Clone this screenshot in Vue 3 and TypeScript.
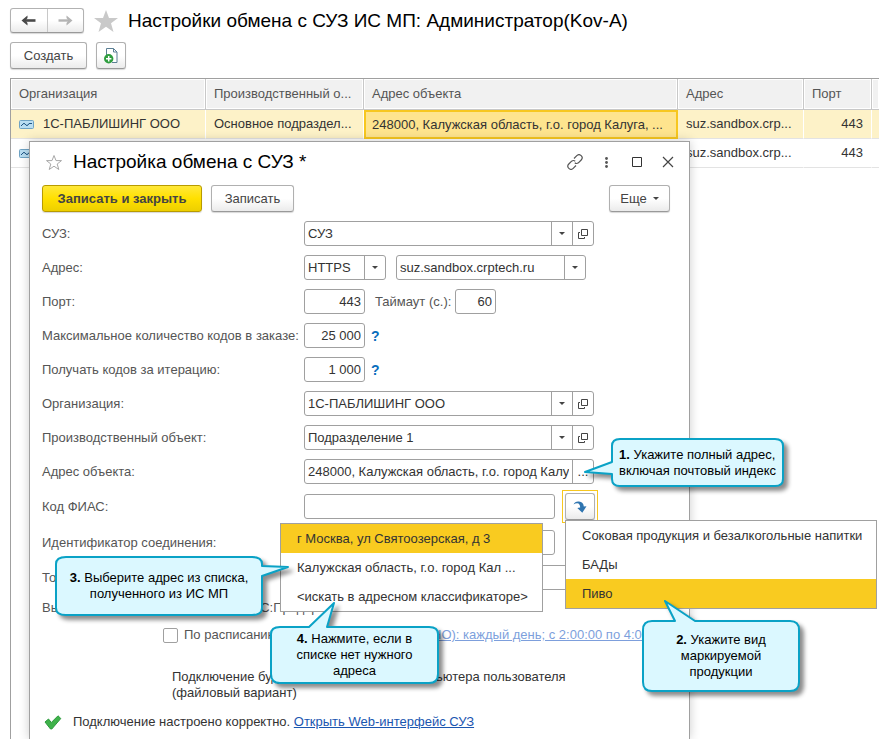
<script setup lang="ts">
import { ref } from 'vue'

interface ExchangeRow {
  org: string
  unit: string
  address: string
  host: string
  port: number
}

interface Callout {
  id: number
  lines: string[]
  shape: string
}

const columns = ['Организация', 'Производственный о...', 'Адрес объекта', 'Адрес', 'Порт', '']

const rows: ExchangeRow[] = [
  {
    org: '1С-ПАБЛИШИНГ ООО',
    unit: 'Основное подраздел...',
    address: '248000, Калужская область, г.о. город Калуга, ...',
    host: 'suz.sandbox.crp...',
    port: 443,
  },
  { org: '', unit: '', address: '', host: 'suz.sandbox.crp...', port: 443 },
]

const addressOptions = [
  'г Москва, ул Святоозерская, д 3',
  'Калужская область, г.о. город Кал ...',
  '<искать в адресном классификаторе>',
]
const productOptions = ['Соковая продукция и безалкогольные напитки', 'БАДы', 'Пиво']

const callouts: Callout[] = [
  {
    id: 1,
    lines: ['Укажите полный адрес,', 'включая почтовый индекс'],
    shape: 'M9 1H164Q172 1 172 8V41Q172 48 164 48H9Q1 48 1 41V36L-26 34L1 24V8Q1 1 9 1Z',
  },
  {
    id: 2,
    lines: ['Укажите вид', 'маркируемой', 'продукции'],
    shape: 'M10 1H33L23 -19L53 1H148Q157 1 157 10V62Q157 71 148 71H10Q1 71 1 62V10Q1 1 10 1Z',
  },
  {
    id: 3,
    lines: ['Выберите адрес из списка,', 'полученного из ИС МП'],
    shape: 'M11 1H197Q207 1 207 8V10L233 11L207 20V52Q207 59 197 59H11Q1 59 1 52V8Q1 1 11 1Z',
  },
  {
    id: 4,
    lines: ['Нажмите, если в', 'списке нет нужного', 'адреса'],
    shape: 'M10 1H39L64 -23L57 1H159Q168 1 168 8V48Q168 57 159 57H10Q1 57 1 48V8Q1 1 10 1Z',
  },
]

const host = ref('suz.sandbox.crptech.ru')
const port = ref('443')
const timeout = ref('60')
const maxCodes = ref('25 000')
const perIteration = ref('1 000')
const address = ref('248000, Калужская область, г.о. город Калуга')
const fias = ref('')
const connection = ref('')
const token = ref('')
const scheduled = ref(false)
</script>

<template>
  <main class="page">
    <header class="page-head">
      <div class="nav">
        <button type="button" aria-label="Назад">
          <svg width="15" height="11" viewBox="0 0 15 11"><path d="M2 5.500H14.500" stroke="#4a4a4a" stroke-width="2.600" /><path d="M0.500 5.500L6.500 0.500V3L4.500 5.500L6.500 8V10.500Z" fill="#4a4a4a" /></svg>
        </button>
        <button type="button" aria-label="Вперед">
          <svg width="15" height="11" viewBox="0 0 15 11"><path d="M0.500 5.500H13" stroke="#b4b4b4" stroke-width="2.400" /><path d="M14.500 5.500L8.500 0.500V3L10.500 5.500L8.500 8V10.500Z" fill="#b4b4b4" /></svg>
        </button>
      </div>
      <svg class="star" width="24" height="22" viewBox="0 0 24 22"><path d="M12 0L15 8H24L17 13.200L19.500 22L12 16.800L4.500 22L7 13.200L0 8H9Z" fill="#c9c9c9" /></svg>
      <h1>Настройки обмена с СУЗ ИС МП: Администратор(Kov-A)</h1>
    </header>

    <div class="toolbar">
      <button type="button" class="btn create">Создать</button>
      <button type="button" class="btn add" aria-label="Создать копированием">
        <svg width="14" height="16" viewBox="0 0 14 16">
          <path d="M2.500 7V0.500H9.500L13 4V14.500H8" fill="#fff" stroke="#5b7f94" />
          <path d="M9.500 0.500V4H13" fill="none" stroke="#5b7f94" />
          <circle cx="4.700" cy="10.700" r="4.700" fill="#2f9e3f" />
          <path d="M4.700 8V13.400M2 10.700H7.400" stroke="#fff" stroke-width="1.500" />
        </svg>
      </button>
    </div>

    <div class="list">
      <table>
        <colgroup>
          <col class="c-org" /><col class="c-unit" /><col class="c-address" /><col class="c-host" /><col class="c-port" /><col />
        </colgroup>
        <thead>
          <tr><th v-for="(name, i) in columns" :key="i">{{ name }}</th></tr>
        </thead>
        <tbody>
          <tr v-for="(row, i) in rows" :key="i" :class="{ selected: i === 0 }">
            <td>
              <span class="org">
                <svg width="15" height="9" viewBox="0 0 15 9">
                  <rect x="0.500" y="0.500" width="14" height="8" rx="1" fill="#b9def2" stroke="#6fa3c4" />
                  <path d="M2 6L4 4Q5 2.500 6 4T8 5.500T10 3.500H13" fill="none" stroke="#1e5584" />
                </svg>
                {{ row.org }}
              </span>
            </td>
            <td>{{ row.unit }}</td>
            <td :class="{ active: i === 0 }">{{ row.address }}</td>
            <td>{{ row.host }}</td>
            <td class="num">{{ row.port }}</td>
            <td></td>
          </tr>
        </tbody>
      </table>
    </div>

    <section class="dialog" aria-labelledby="dialog-title">
      <header class="dialog-head">
        <svg width="18" height="17" viewBox="0 0 18 17"><path d="M9 1.500L11 6.600H16.500L12.200 10L13.800 15.500L9 12.200L4.200 15.500L5.800 10L1.500 6.600H7Z" fill="#fff" stroke="#a8a8a8" /></svg>
        <h2 id="dialog-title">Настройка обмена с СУЗ *</h2>
        <div class="window-tools">
          <button type="button" aria-label="Ссылка">
            <svg width="16" height="16" viewBox="0 0 16 16" fill="none" stroke="#555" stroke-width="1.200"><path d="M7 4.500L9.800 1.700A2.800 2.800 0 0 1 14.200 6L11.400 8.800Q9.500 10.200 7.800 8.800M9 11.500L6.200 14.300A2.800 2.800 0 0 1 1.800 10L4.600 7.200Q6.500 5.800 8.200 7.200" /></svg>
          </button>
          <button type="button" aria-label="Меню">
            <svg width="3" height="11" viewBox="0 0 3 11" fill="#555"><circle cx="1.500" cy="1.500" r="1.400" /><circle cx="1.500" cy="5.500" r="1.400" /><circle cx="1.500" cy="9.500" r="1.400" /></svg>
          </button>
          <button type="button" aria-label="Развернуть">
            <svg width="10" height="10" viewBox="0 0 10 10"><path d="M0.500 0.500H9.500V9.500H0.500Z" fill="none" stroke="#333" /></svg>
          </button>
          <button type="button" aria-label="Закрыть">
            <svg width="12" height="12" viewBox="0 0 12 12"><path d="M1 1L11 11M11 1L1 11" stroke="#444" stroke-width="1.200" /></svg>
          </button>
        </div>
      </header>

      <div class="commands">
        <button type="button" class="btn primary">Записать и закрыть</button>
        <button type="button" class="btn save">Записать</button>
        <button type="button" class="btn more">Еще <i class="caret"></i></button>
      </div>

      <form class="form" @submit.prevent>
        <div class="row">
          <label for="suz">СУЗ:</label>
          <div class="combo wide">
            <div class="pick"><select id="suz"><option>СУЗ</option></select><span class="arrow"><i class="caret"></i></span></div>
            <button type="button" class="part" aria-label="Открыть СУЗ"><svg width="10" height="10" viewBox="0 0 10 10"><path d="M3.500 0.500H9.500V6.500H3.500ZM2 3.500H0.500V9.500H6.500V8" fill="none" stroke="#444" /></svg></button>
          </div>
        </div>

        <div class="row">
          <label for="protocol">Адрес:</label>
          <div class="combo protocol">
            <div class="pick"><select id="protocol"><option>HTTPS</option></select><span class="arrow"><i class="caret"></i></span></div>
          </div>
          <div class="combo host">
            <input v-model="host" type="text" aria-label="Адрес сервера" />
            <button type="button" class="part" aria-label="Выбрать адрес"><i class="caret"></i></button>
          </div>
        </div>

        <div class="row">
          <label for="port">Порт:</label>
          <input id="port" v-model="port" class="box num short" type="text" />
          <label class="inline" for="timeout">Таймаут (с.):</label>
          <input id="timeout" v-model="timeout" class="box num tiny" type="text" />
        </div>

        <div class="row">
          <label for="max">Максимальное количество кодов в заказе:</label>
          <input id="max" v-model="maxCodes" class="box num short" type="text" />
          <a class="hint" href="#">?</a>
        </div>

        <div class="row">
          <label for="iter">Получать кодов за итерацию:</label>
          <input id="iter" v-model="perIteration" class="box num short" type="text" />
          <a class="hint" href="#">?</a>
        </div>

        <div class="row">
          <label for="org">Организация:</label>
          <div class="combo wide">
            <div class="pick"><select id="org"><option>1С-ПАБЛИШИНГ ООО</option></select><span class="arrow"><i class="caret"></i></span></div>
            <button type="button" class="part" aria-label="Открыть организацию"><svg width="10" height="10" viewBox="0 0 10 10"><path d="M3.500 0.500H9.500V6.500H3.500ZM2 3.500H0.500V9.500H6.500V8" fill="none" stroke="#444" /></svg></button>
          </div>
        </div>

        <div class="row">
          <label for="unit">Производственный объект:</label>
          <div class="combo wide">
            <div class="pick"><select id="unit"><option>Подразделение 1</option></select><span class="arrow"><i class="caret"></i></span></div>
            <button type="button" class="part" aria-label="Открыть объект"><svg width="10" height="10" viewBox="0 0 10 10"><path d="M3.500 0.500H9.500V6.500H3.500ZM2 3.500H0.500V9.500H6.500V8" fill="none" stroke="#444" /></svg></button>
          </div>
        </div>

        <div class="row">
          <label for="address">Адрес объекта:</label>
          <div class="combo wide">
            <input id="address" v-model="address" type="text" />
            <button type="button" class="part" aria-label="Выбрать адрес объекта">...</button>
          </div>
        </div>

        <div class="row tall">
          <label for="fias">Код ФИАС:</label>
          <input id="fias" v-model="fias" class="box medium" type="text" />
          <span class="focus-frame">
            <button type="button" class="btn refill" aria-label="Заполнить">
              <svg width="14" height="12" viewBox="0 0 14 12"><path d="M0.500 3.500Q2 0 6 0.500Q10.500 1 10.800 5.500L13.500 5.300L9.300 11.800L4.300 7L7.200 6.500Q7 2.500 4.300 2.300Q2.500 2.200 0.500 3.500Z" fill="#2f75b0" /></svg>
            </button>
          </span>
        </div>

        <div class="row tall">
          <label for="connection">Идентификатор соединения:</label>
          <input id="connection" v-model="connection" class="box medium" type="text" />
        </div>

        <div class="row">
          <label for="token">Токен:</label>
          <input id="token" v-model="token" class="box wide" type="text" />
        </div>

        <p class="row text server">Выполнять отправку через сервер 1С:Предпр</p>

        <div class="row text schedule">
          <input id="scheduled" v-model="scheduled" type="checkbox" />
          <label class="inline" for="scheduled">По расписанию</label>
          <a href="#">НО): каждый день; с 2:00:00 по 4:00</a>
        </div>

        <p class="note">Подключение будет осуществляться с компьютера пользователя<br />(файловый вариант)</p>

        <p class="status">
          <svg width="18" height="15" viewBox="0 0 18 15"><path d="M1 7L4.500 4L7.300 7.500L14 0.800L16.800 3.500L7.800 14H6.500Z" fill="#3fb24a" stroke="#2c9a3c" stroke-linejoin="round" /></svg>
          <span>Подключение настроено корректно. <a href="#">Открыть Web-интерфейс СУЗ</a></span>
        </p>
      </form>
    </section>

    <ul class="menu address-menu">
      <li v-for="(text, i) in addressOptions" :key="text"><button type="button" :class="{ current: i === 0 }">{{ text }}</button></li>
    </ul>
    <ul class="menu product-menu">
      <li v-for="(text, i) in productOptions" :key="text"><button type="button" :class="{ current: i === 2 }">{{ text }}</button></li>
    </ul>

    <aside v-for="c in callouts" :key="c.id" class="callout" :class="'callout-' + c.id">
      <svg width="100%" height="100%"><path :d="c.shape" fill="#dbf8ff" stroke="#0aa2c6" stroke-width="2" stroke-linejoin="round" /></svg>
      <p>
        <b>{{ c.id }}.</b>&nbsp;<template v-for="(line, i) in c.lines" :key="i"><br v-if="i > 0" />{{ line }}</template>
      </p>
    </aside>
  </main>
</template>

<style>
body {
  overflow: hidden;
}
</style>

<style scoped>
* {
  box-sizing: border-box;
}
.page {
  position: relative;
  display: flex;
  flex-direction: column;
  min-height: 100vh;
  padding: 8px 0 0 10px;
  overflow: hidden;
  background: #fff;
  color: #333;
  font: 13px/16px "Liberation Sans", Arial, sans-serif;
}
button,
input,
select {
  font: inherit;
  color: inherit;
}
button {
  display: flex;
  align-items: center;
  justify-content: center;
  padding: 0;
  border: 0;
  background: none;
}
h1,
h2,
p,
ul {
  margin: 0;
  padding: 0;
}
h1,
h2 {
  color: #000;
  font-size: 19px;
  line-height: 24px;
  font-weight: 400;
  white-space: nowrap;
}
.page-head {
  display: flex;
  align-items: center;
}
.nav {
  display: flex;
  width: 74px;
  height: 25px;
  border: 1px solid #b2b2b2;
  border-bottom-color: #999;
  border-radius: 3px;
  background: linear-gradient(#fff 50%, #ebebeb);
  box-shadow: 0 1px 1px #d8d8d8;
}
.nav button {
  flex: 1;
}
.nav button + button {
  border-left: 1px solid #c8c8c8;
}
.star {
  margin: 0 10px;
}
.toolbar {
  display: flex;
  gap: 9px;
  margin: 9px 0;
}
.btn {
  height: 27px;
  border: 1px solid #b0b0b0;
  border-bottom-color: #999;
  border-radius: 3px;
  background: linear-gradient(#fff 50%, #ebebeb);
  box-shadow: 0 1px 1px #d8d8d8;
  color: #444;
}
.create {
  width: 77px;
}
.add {
  width: 30px;
}
.list {
  flex: 1;
  border: 1px solid #a0a0a0;
  border-width: 1px 0 0 1px;
}
table {
  width: 100%;
  table-layout: fixed;
  border-collapse: separate;
  border-spacing: 0;
}
.c-org {
  width: 195px;
}
.c-unit {
  width: 158px;
}
.c-address {
  width: 314px;
}
.c-host {
  width: 126px;
}
.c-port {
  width: 68px;
}
th,
td {
  padding: 0 8px;
  overflow: hidden;
  text-align: left;
  white-space: nowrap;
}
th:last-child,
td:last-child {
  padding: 0;
  border-right: 0;
}
th {
  height: 31px;
  border-right: 1px solid #c8c8c8;
  border-bottom: 1px solid #c8c8c8;
  background: #f1f1f1;
  box-shadow: inset 1px 1px #fff, inset -1px -1px #fff;
  color: #555;
  font-weight: 400;
}
td {
  height: 29px;
  border-right: 1px solid transparent;
  border-bottom: 1px solid #e3e3e3;
}
.selected td {
  border-right-color: #fff;
  background: #fdf2c8;
}
.selected td.active {
  padding: 0 6px;
  border: 2px solid #f7c71f;
  background: #fee48e;
}
.org {
  display: flex;
  align-items: center;
  gap: 9px;
}
td.num {
  text-align: right;
}
.dialog {
  position: absolute;
  top: 141px;
  left: 29px;
  width: 661px;
  bottom: 0;
  padding: 0 12px;
  border: 1px solid #a0a0a0;
  border-bottom: 0;
  background: #fff;
  box-shadow: 0 0 10px rgba(0, 0, 0, 0.2);
}
.dialog-head {
  display: flex;
  align-items: center;
  height: 40px;
  margin: 0 0 3px 3px;
}
.dialog-head h2 {
  margin-left: 10px;
}
.window-tools {
  display: flex;
  gap: 13px;
  margin-left: auto;
}
.window-tools button {
  width: 18px;
  height: 18px;
}
.commands {
  display: flex;
  gap: 9px;
  margin-bottom: 9px;
}
.primary {
  width: 160px;
  border-color: #b89b00;
  background: linear-gradient(#ffe83a, #ffe000 50%, #edcf00);
  font-weight: 700;
}
.save {
  width: 83px;
}
.more {
  gap: 6px;
  width: 61px;
  margin: 0 7px 0 auto;
}
.caret {
  width: 0;
  height: 0;
  border: 3px solid transparent;
  border-top-color: #444;
  border-bottom-width: 0;
}
.form {
  display: flex;
  flex-direction: column;
  gap: 9px;
}
.row {
  display: flex;
  align-items: center;
  height: 25px;
  white-space: nowrap;
}
.row.tall {
  height: 27px;
}
.row.text {
  height: 18px;
}
.server {
  color: #555;
}
label {
  flex: none;
  width: 262px;
  color: #555;
}
label.inline {
  width: auto;
}
.box,
.combo {
  height: 25px;
  border: 1px solid #a0a0a0;
  border-radius: 3px;
  background: #fff;
}
.box {
  padding: 0 3px;
}
.num {
  text-align: right;
}
.combo {
  display: flex;
}
.combo input,
.pick {
  flex: 1;
  min-width: 0;
}
.combo input,
.combo select {
  width: 100%;
  padding: 0 3px;
  border: 0;
  background: none;
}
.pick {
  display: grid;
  grid-template-columns: 1fr 21px;
}
.pick select {
  grid-area: 1 / 1 / 2 / 3;
  appearance: none;
}
.arrow {
  display: flex;
  grid-area: 1 / 2;
  align-items: center;
  justify-content: center;
  border-left: 1px solid #a0a0a0;
  pointer-events: none;
}
.part {
  width: 21px;
  border-left: 1px solid #a0a0a0;
}
.wide {
  width: 290px;
}
.medium {
  width: 251px;
}
.protocol {
  width: 82px;
}
.host {
  width: 190px;
  margin-left: 10px;
}
.short {
  width: 61px;
}
.tiny {
  width: 41px;
}
.short + .inline {
  width: 80px;
  margin-left: 10px;
}
.hint {
  margin-left: 6px;
  color: #0a6ebd;
  font-size: 14px;
  font-weight: 700;
  text-decoration: none;
}
.focus-frame {
  margin-left: 7px;
  padding: 2px;
  border: 1px solid #f7c71f;
}
.refill {
  width: 30px;
}
.schedule {
  padding-left: 121px;
}
.schedule input {
  width: 15px;
  height: 15px;
  margin: 0 6px 0 0;
  border: 1px solid #a0a0a0;
  border-radius: 2px;
  appearance: none;
}
.schedule label.inline {
  width: 248px;
}
.schedule a {
  color: #7d9fdc;
}
.note {
  margin-top: 16px;
  padding-left: 130px;
}
.status {
  display: flex;
  align-items: center;
  gap: 11px;
  height: 18px;
  margin: 3px 0 0 2px;
}
.status a {
  color: #1a56b0;
}
.menu {
  position: absolute;
  border: 1px solid #a0a0a0;
  background: #fff;
  list-style: none;
}
.menu button {
  justify-content: flex-start;
  width: 100%;
  height: 29px;
  padding: 0 16px;
  white-space: nowrap;
}
.menu .current {
  background: #f9cb20;
}
.address-menu {
  top: 523px;
  left: 280px;
  width: 263px;
}
.product-menu {
  top: 520px;
  left: 565px;
  width: 312px;
}
.callout {
  position: absolute;
  display: flex;
  align-items: center;
  justify-content: center;
  color: #000;
  text-align: center;
}
.callout svg {
  position: absolute;
  inset: 0;
  overflow: visible;
  filter: drop-shadow(4px 4px 2px rgba(0, 0, 0, 0.45));
}
.callout p {
  position: relative;
  white-space: nowrap;
}
.callout-1 {
  top: 438px;
  left: 611px;
  width: 173px;
  height: 49px;
}
.callout-1 p {
  text-align: left;
}
.callout-2 {
  top: 620px;
  left: 642px;
  width: 158px;
  height: 72px;
}
.callout-3 {
  top: 556px;
  left: 55px;
  width: 208px;
  height: 60px;
}
.callout-4 {
  top: 626px;
  left: 270px;
  width: 169px;
  height: 58px;
}
</style>
